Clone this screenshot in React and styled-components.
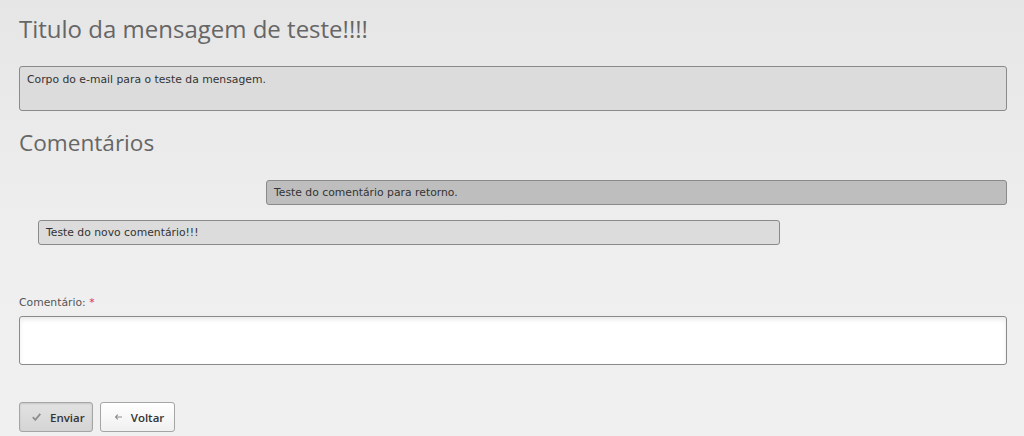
import React from "react";
import styled, { createGlobalStyle } from "styled-components";

const GlobalStyle = createGlobalStyle`
  html, body {
    margin: 0;
    padding: 0;
    height: 100%;
  }
  body {
    background: linear-gradient(to bottom, #e6e6e6 0%, #efefef 60%, #f0f0f0 100%);
    font-family: "DejaVu Sans", Verdana, sans-serif;
    min-height: 436px;
  }
`;

const Page = styled.div`
  padding: 11px 17px 0 19px;
`;

const Title = styled.h1`
  margin: 0;
  font-family: "Open Sans", sans-serif;
  font-weight: 400;
  font-size: 24px;
  line-height: 36px;
  color: #666;
`;

const SectionTitle = styled.h2`
  margin: 14px 0 0;
  font-family: "Open Sans", sans-serif;
  font-weight: 400;
  font-size: 22.6px;
  line-height: 36px;
  color: #666;
`;

const BodyBox = styled.div`
  margin-top: 19px;
  height: 45px;
  box-sizing: border-box;
  padding: 5px 7px;
  background: #dcdcdc;
  border: 1px solid #8a8a8a;
  border-radius: 3px;
  font-size: 10.8px;
  line-height: 16px;
  color: #333;
`;

const CommentList = styled.div`
  display: flex;
  flex-direction: column;
  gap: 15px;
  margin-top: 19px;
`;

// resposta fica à direita, comentário novo recuado à esquerda
const CommentBubble = styled.div`
  width: ${(p) => (p.$reply ? "75%" : "calc(75% + 1px)")};
  box-sizing: border-box;
  align-self: ${(p) => (p.$reply ? "flex-end" : "flex-start")};
  margin-left: ${(p) => (p.$reply ? "0" : "19px")};
  height: 25px;
  padding: 4px 7px;
  background: ${(p) => (p.$reply ? "#bebebe" : "#dcdcdc")};
  border: 1px solid #8a8a8a;
  border-radius: 3px;
  font-size: 10.8px;
  line-height: 16px;
  color: #333;
`;

const Field = styled.div`
  margin-top: 50px;
`;

const Label = styled.label`
  display: block;
  font-size: 10.8px;
  line-height: 16px;
  color: #555;
  margin-bottom: 5px;
`;

const Required = styled.span`
  color: #e03030;
`;

const TextArea = styled.textarea`
  display: block;
  width: 100%;
  height: 49px;
  box-sizing: border-box;
  resize: none;
  background: #fff;
  border: 1px solid #8a8a8a;
  border-radius: 3px;
  box-shadow: inset 0 3px 4px rgba(0, 0, 0, 0.08);
  outline: none;
`;

const Actions = styled.div`
  display: flex;
  gap: 7px;
  margin-top: 37px;
`;

const Button = styled.button`
  display: flex;
  align-items: center;
  gap: 9px;
  height: 30px;
  box-sizing: border-box;
  padding: ${(p) => (p.$primary ? "0 7px 0 12px" : "0 10px 0 14px")};
  border: 1px solid #a5a5a5;
  border-radius: 3px;
  background: ${(p) =>
    p.$primary
      ? "linear-gradient(to bottom, #e2e2e2, #d4d4d4)"
      : "linear-gradient(to bottom, #ffffff, #f0f0f0)"};
  box-shadow: ${(p) => (p.$primary ? "inset 0 1px 2px rgba(0,0,0,0.12)" : "none")};
  font-family: "Open Sans", sans-serif;
  font-size: 11.5px;
  font-weight: 600;
  color: #333;
  cursor: pointer;
`;

const Check = () => (
  <svg width="9" height="8" viewBox="0 0 9 8">
    <path d="M0.8 4.2 L3.3 6.8 L8.3 0.8" fill="none" stroke="#8d8d8d" strokeWidth="1.8" />
  </svg>
);

const Arrow = () => (
  <svg width="7" height="6" viewBox="0 0 7 6">
    <path d="M0.5 3 H7 M2.8 0.7 L0.5 3 L2.8 5.3" fill="none" stroke="#8d8d8d" strokeWidth="1.2" />
  </svg>
);

function App() {
  return (
    <>
      <GlobalStyle />
      <Page>
        <Title>Titulo da mensagem de teste!!!!</Title>
        <BodyBox>Corpo do e-mail para o teste da mensagem.</BodyBox>
        <SectionTitle>Comentários</SectionTitle>
        <CommentList>
          <CommentBubble $reply>Teste do comentário para retorno.</CommentBubble>
          <CommentBubble>Teste do novo comentário!!!</CommentBubble>
        </CommentList>
        <Field>
          <Label>
            Comentário: <Required>*</Required>
          </Label>
          <TextArea />
        </Field>
        <Actions>
          <Button $primary>
            <Check /> Enviar
          </Button>
          <Button>
            <Arrow /> Voltar
          </Button>
        </Actions>
      </Page>
    </>
  );
}

export default App;
